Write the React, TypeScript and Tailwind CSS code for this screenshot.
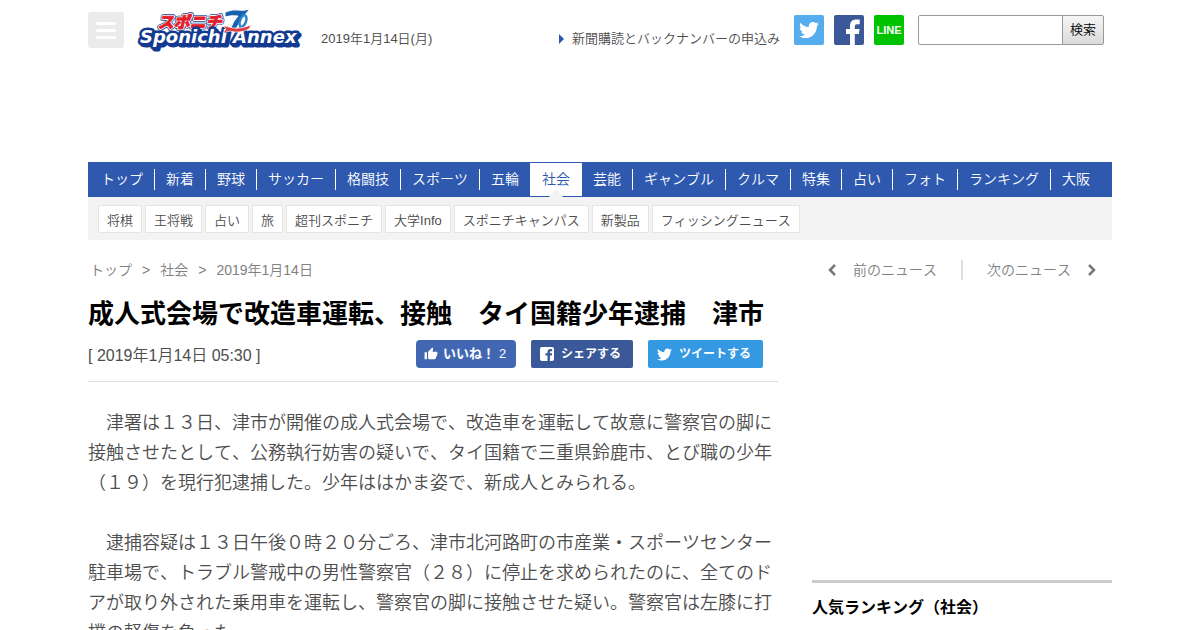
import { FaTwitter } from "react-icons/fa";
import { MdThumbUp } from "react-icons/md";

const navItems = [
  "トップ", "新着", "野球", "サッカー", "格闘技", "スポーツ", "五輪", "社会", "芸能",
  "ギャンブル", "クルマ", "特集", "占い", "フォト", "ランキング", "大阪",
];
const activeIndex = 7;

const subItems = [
  "将棋", "王将戦", "占い", "旅", "超刊スポニチ", "大学Info", "スポニチキャンパス", "新製品", "フィッシングニュース",
];

function Logo() {
  return (
    <svg width="169" height="44" viewBox="0 0 169 44" role="img" aria-label="スポニチ Sponichi Annex">
      <g strokeLinejoin="round">
        <g fontFamily="'Noto Sans CJK JP', sans-serif" fontWeight="900" fontSize="16">
          <text x="26" y="20" transform="skewX(-12)" stroke="#173f94" strokeWidth="4" fill="#173f94">スポニチ</text>
          <text x="26" y="20" transform="skewX(-12)" stroke="#fff" strokeWidth="2.500" fill="#fff">スポニチ</text>
          <text x="26" y="20" transform="skewX(-12)" stroke="#e3202b" strokeWidth="0.8" fill="#e3202b">スポニチ</text>
        </g>
        <g fontFamily="'DejaVu Sans', sans-serif" fontWeight="700" fontStyle="italic" fontSize="18">
          <text x="6" y="37" stroke="#123a91" strokeWidth="5" fill="#123a91">Sponichi Annex</text>
          <text x="4" y="35" stroke="#123a91" strokeWidth="5" fill="#123a91">Sponichi Annex</text>
          <text x="4" y="35" fill="#fff">Sponichi Annex</text>
        </g>
      </g>
      <path d="M89 4q8-3 13-2 6 1 12-1-9 9-14 20l-6 1q3-9 8-14-7-1-13 1z" fill="#1763ae" stroke="#fff" strokeWidth="1" />
      <ellipse cx="107" cy="13" rx="3" ry="6" transform="rotate(20 107 13)" fill="#fff" stroke="#2a86c8" strokeWidth="2.500" />
      <path d="M87 18l6 1q9 3 19-1l3-1-2 4q-10 5-19 2l-7 2 3-4z" fill="#e0393e" stroke="#fff" strokeWidth="0.7" />
    </svg>
  );
}

function Header() {
  return (
    <header className="flex h-[162px] items-start pt-2 pr-2 whitespace-nowrap">
      <button aria-label="メニュー" className="mt-1 flex size-9 flex-col items-center justify-center gap-1 rounded-[3px] bg-[#ebebeb]">
        <span className="h-[3px] w-5 rounded-full bg-white" />
        <span className="h-[3px] w-5 rounded-full bg-white" />
        <span className="h-[3px] w-5 rounded-full bg-white" />
      </button>
      <a href="#" className="ml-3"><Logo /></a>
      <p className="mt-[21px] ml-4 text-[13px] leading-5">2019年1月14日(月)</p>
      <a href="#" className="mt-[21px] ml-auto flex items-center gap-2 text-[13px] leading-5">
        <svg width="5" height="10" viewBox="0 0 5 10" aria-hidden="true"><path d="M0 0l5 5-5 5z" fill="#2c5aae" /></svg>
        新聞購読とバックナンバーの申込み
      </a>
      <div className="mt-[7px] ml-[14px] flex gap-[10px] text-white">
        <a href="#" aria-label="Twitter" className="flex size-[30px] items-center justify-center rounded-[2px] bg-[#55acee]">
          <FaTwitter size={20} />
        </a>
        <a href="#" aria-label="Facebook" className="size-[30px] rounded-[2px] bg-[#3b5998]">
          <svg width="30" height="30" viewBox="0 0 30 30" aria-hidden="true">
            <path d="M16 30V19h-4v-5h4v-3c0-4.500 2.500-6.500 6.500-6.500h3.200v4.700h-2.500c-2 0-2.400 1-2.400 2.300V14h4.700l-.6 5h-4.100v11z" fill="#fff" />
          </svg>
        </a>
        <a href="#" className="flex size-[30px] items-center justify-center rounded-[2px] bg-[#00c300] font-['Liberation_Sans',sans-serif] text-[11px] font-bold">LINE</a>
      </div>
      <form className="mt-[7px] ml-[14px] flex h-[30px]">
        <input type="text" aria-label="検索" className="w-[145px] rounded-l-[2px] border border-[#999] bg-white px-2 text-[13px]" />
        <button type="button" className="-ml-px w-[42px] rounded-r-[2px] border border-[#999] bg-linear-to-b from-[#f5f5f5] to-[#dadada] text-[13px] text-black">検索</button>
      </form>
    </header>
  );
}

function Navigation() {
  return (
    <nav className="whitespace-nowrap">
      <ul className="flex h-[35px] items-center bg-[#2e59af] pl-[2px] text-sm text-white">
        {navItems.map((item, i) => {
          if (i === activeIndex) {
            return (
              <li key={item} className="relative h-[33px] bg-white px-3 leading-[33px] text-[#2e59af]">
                <a href="#">{item}</a>
                <svg className="absolute -bottom-px left-[19px]" width="14" height="8" viewBox="0 0 14 8" aria-hidden="true">
                  <path d="M7 0l7 8H0z" fill="#f2f2f2" />
                </svg>
              </li>
            );
          }
          const divided = i !== activeIndex - 1 && i !== navItems.length - 1;
          return (
            <li key={item} className={divided ? "h-[21px] border-r border-white px-[11px] leading-[21px]" : "h-[21px] px-[11px] leading-[21px]"}>
              <a href="#">{item}</a>
            </li>
          );
        })}
      </ul>
      <ul className="flex h-[43px] gap-[3px] bg-[#f3f3f3] pt-2 pl-[10px] text-[13px]">
        {subItems.map((item) => (
          <li key={item} className="h-7 rounded-[1px] border border-[#e4e4e0] bg-white px-2 pt-px leading-7">
            <a href="#">{item}</a>
          </li>
        ))}
      </ul>
    </nav>
  );
}

function ShareButtons() {
  return (
    <div className="flex h-7 font-bold text-white">
      <button className="flex w-[100px] items-center rounded-[4px] bg-[#4267b2] pl-2 text-[13px]">
        <MdThumbUp size={14} />
        <span className="ml-[5px]">いいね！</span>
        <span className="ml-1 font-normal">2</span>
      </button>
      <a href="#" className="ml-[15px] flex w-[102px] items-center rounded-[2px] bg-[#3b5998] pl-[9px] text-[12px]">
        <svg width="14" height="14" viewBox="0 0 14 14" aria-hidden="true">
          <rect width="14" height="14" rx="2" fill="#fff" />
          <path d="M7.500 14V8.500H5.500V6.300h2V5c0-2 1-3 3-3h1.600v2.200h-1.200c-.8 0-1 .3-1 .9v1.200h2.200l-.3 2.200H9.900V14z" fill="#3b5998" />
        </svg>
        <span className="ml-[7px]">シェアする</span>
      </a>
      <a href="#" className="ml-[15px] flex w-[115px] items-center rounded-[2px] bg-[#3598e2] pl-[9px] text-[12px]">
        <FaTwitter size={15} />
        <span className="ml-[7px]">ツイートする</span>
      </a>
    </div>
  );
}

function Article() {
  return (
    <main className="w-[690px] shrink-0 pt-5">
      <ol className="flex gap-[10px] pl-[2px] text-sm text-[#808080]">
        <li><a href="#">トップ</a></li>
        <li aria-hidden="true">&gt;</li>
        <li><a href="#">社会</a></li>
        <li aria-hidden="true">&gt;</li>
        <li>2019年1月14日</li>
      </ol>
      <h1 className="mt-[14px] text-[26px] leading-10 font-bold whitespace-nowrap text-black">成人式会場で改造車運転、接触　タイ国籍少年逮捕　津市</h1>
      <div className="mt-[6px] flex items-start justify-between border-b border-[#ddd] pr-[15px] pb-[13px]">
        <p className="mt-1 text-base">[ 2019年1月14日 05:30 ]</p>
        <ShareButtons />
      </div>
      <div className="mt-[26px] text-lg leading-[30px]">
        <p>　津署は１３日、津市が開催の成人式会場で、改造車を運転して故意に警察官の脚に接触させたとして、公務執行妨害の疑いで、タイ国籍で三重県鈴鹿市、とび職の少年（１９）を現行犯逮捕した。少年ははかま姿で、新成人とみられる。</p>
        <p className="mt-[30px]">　逮捕容疑は１３日午後０時２０分ごろ、津市北河路町の市産業・スポーツセンター駐車場で、トラブル警戒中の男性警察官（２８）に停止を求められたのに、全てのドアが取り外された乗用車を運転し、警察官の脚に接触させた疑い。警察官は左膝に打撲の軽傷を負った。</p>
      </div>
    </main>
  );
}

function Sidebar() {
  return (
    <aside className="w-[300px] shrink-0 pt-5">
      <div className="flex h-5 items-center justify-between px-4 text-sm text-[#808080]">
        <a href="#" className="flex items-center gap-[17px]">
          <svg width="8" height="12" viewBox="0 0 8 12" aria-hidden="true"><path d="M7 1L2 6l5 5" fill="none" stroke="#777" strokeWidth="2.500" /></svg>
          前のニュース
        </a>
        <span className="h-5 w-[2px] bg-[#ddd]" />
        <a href="#" className="flex items-center gap-[17px]">
          次のニュース
          <svg width="8" height="12" viewBox="0 0 8 12" aria-hidden="true"><path d="M1 1l5 5-5 5" fill="none" stroke="#777" strokeWidth="2.500" /></svg>
        </a>
      </div>
      <section className="mt-[300px] border-t-[3px] border-[#ccc] pt-[13px]">
        <h2 className="text-base font-bold text-black">人気ランキング（社会）</h2>
      </section>
    </aside>
  );
}

export default function App() {
  return (
    <div lang="ja" className="min-h-screen bg-white font-['Liberation_Sans','Noto_Sans_CJK_JP',sans-serif] font-[350] text-[#4d4d4d] [font-kerning:none]">
      <div className="mx-auto max-w-[1024px]">
        <Header />
        <Navigation />
        <div className="flex justify-between">
          <Article />
          <Sidebar />
        </div>
      </div>
    </div>
  );
}
